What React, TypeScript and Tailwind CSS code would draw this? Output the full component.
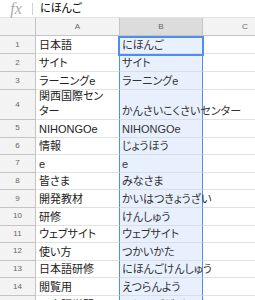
import React from 'react';

const rows: { a: React.ReactNode; b: string; tall?: boolean }[] = [
  { a: '日本語', b: 'にほんご' },
  { a: 'サイト', b: 'サイト' },
  { a: 'ラーニングe', b: 'ラーニングe' },
  { a: <>関西国際セン<br />ター</>, b: 'かんさいこくさいセンター', tall: true },
  { a: 'NIHONGOe', b: 'NIHONGOe' },
  { a: '情報', b: 'じょうほう' },
  { a: 'e', b: 'e' },
  { a: '皆さま', b: 'みなさま' },
  { a: '開発教材', b: 'かいはつきょうざい' },
  { a: '研修', b: 'けんしゅう' },
  { a: 'ウェブサイト', b: 'ウェブサイト' },
  { a: '使い方', b: 'つかいかた' },
  { a: '日本語研修', b: 'にほんごけんしゅう' },
  { a: '閲覧用', b: 'えつらんよう' },
  { a: '日本語学習', b: 'にほんごがくしゅう' },
];

export default function App() {
  return (
    <div className="relative w-[255px] h-[300px] overflow-hidden bg-white font-['Liberation_Sans','Noto_Sans_CJK_JP',sans-serif] [font-feature-settings:'palt'] text-[11px] text-[#222]">
      {/* formula bar */}
      <div className="h-[18px] flex items-center border-b border-[#e2e2e2]">
        <div className="w-[32px] flex justify-center">
          <span className="font-['Liberation_Serif',serif] italic text-[16px] text-[#aaa] leading-none">fx</span>
        </div>
        <div className="w-px h-[12px] bg-[#d0d0d0]" />
        <div className="pl-[7px] text-black">にほんご</div>
      </div>

      {/* column headers */}
      <div className="h-[18px] flex bg-[#f3f3f3] border-b border-[#c4c4c4] text-[8px] text-[#666]">
        <div className="w-[36px] shrink-0 border-r border-[#c4c4c4]" />
        <div className="w-[83px] shrink-0 flex items-center justify-center">A</div>
        <div className="w-[84px] shrink-0 flex items-center justify-center bg-[#dcdcdc] border-x border-[#c4c4c4]">B</div>
        <div className="w-[84px] shrink-0 flex items-center justify-center">C</div>
      </div>

      {rows.map((r, i) => (
        <div
          key={i}
          className={`flex ${r.tall ? 'h-[30px]' : i < 3 ? 'h-[18px]' : 'h-[17.6px]'}`}
        >
          <div className="w-[36px] shrink-0 flex items-center justify-center bg-[#f3f3f3] border-r border-b border-[#c4c4c4] text-[8px] text-[#666]">
            {i + 1}
          </div>
          <div className="w-[83px] shrink-0 flex items-end pl-[3px] border-b border-[#e2e2e2] leading-[15px] whitespace-nowrap">
            <span>{r.a}</span>
          </div>
          <div className="w-[84px] shrink-0 flex items-end pl-[2px] bg-[#e8f0fe] border-x border-b border-x-[#4d8ef4] border-b-[#d8dee8] leading-[15px] whitespace-nowrap text-[#333]">
            <span className="relative z-10">{r.b}</span>
          </div>
          <div className="flex-1 border-b border-[#e2e2e2]" />
        </div>
      ))}

      {/* active cell outline */}
      <div className="absolute left-[118px] top-[36px] w-[86px] h-[20px] border-2 border-[#4d8ef4] pointer-events-none" />
    </div>
  );
}
